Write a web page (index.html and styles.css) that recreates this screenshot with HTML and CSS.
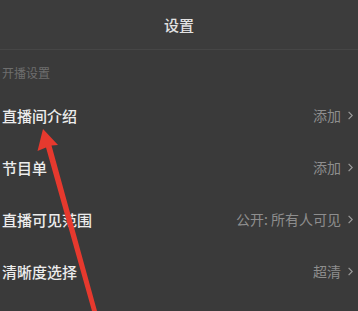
FILE: index.html
```html
<!DOCTYPE html>
<html lang="zh">
<head>
<meta charset="utf-8">
<link rel="stylesheet" href="styles.css">
</head>
<body>
<div class="screen">
  <header class="topbar">设置</header>
  <div class="section-label">开播设置</div>
  <ul class="list">
    <li class="row"><span class="label">直播间介绍</span><span class="value">添加<svg class="chev" viewBox="0 0 5 9"><polyline points="0.6,0.8 4.2,4.5 0.6,8.2"/></svg></span></li>
    <li class="row"><span class="label">节目单</span><span class="value">添加<svg class="chev" viewBox="0 0 5 9"><polyline points="0.6,0.8 4.2,4.5 0.6,8.2"/></svg></span></li>
    <li class="row"><span class="label">直播可见范围</span><span class="value">公开: 所有人可见<svg class="chev" viewBox="0 0 5 9"><polyline points="0.6,0.8 4.2,4.5 0.6,8.2"/></svg></span></li>
    <li class="row"><span class="label">清晰度选择</span><span class="value">超清<svg class="chev" viewBox="0 0 5 9"><polyline points="0.6,0.8 4.2,4.5 0.6,8.2"/></svg></span></li>
  </ul>
  <svg class="arrow" viewBox="0 0 358 311" width="358" height="311">
    <polygon points="43,129 37.5,151 46,147.5 92,311 97,311 51.5,145.5 58,145"/>
  </svg>
</div>
</body>
</html>
```
FILE: styles.css
```css
* { box-sizing: border-box; }
html, body { margin: 0; padding: 0; }
body {
  background: #3a3a3a;
  font-family: "Noto Sans CJK SC", "Noto Sans", sans-serif;
  width: 358px;
  height: 311px;
  overflow: hidden;
}
.screen {
  position: relative;
  width: 358px;
  height: 311px;
}
.topbar {
  height: 50px;
  display: flex;
  align-items: center;
  justify-content: center;
  font-size: 15px;
  font-weight: 500;
  color: #e2e2e2;
  background: #3c3c3c;
  border-bottom: 1px solid #464646;
}
.section-label {
  height: 39px;
  display: flex;
  align-items: center;
  padding: 5px 0 0 2px;
  font-size: 12px;
  color: #6e6e6e;
}
.list {
  list-style: none;
  margin: 0;
  padding: 0;
}
.row {
  height: 52px;
  display: flex;
  align-items: center;
  justify-content: space-between;
  padding: 0 5px 0 2px;
}
.label {
  font-size: 15px;
  font-weight: 500;
  color: #ececec;
}
.value {
  display: flex;
  align-items: center;
  gap: 7px;
  font-size: 14px;
  color: #8e8e8e;
}
.chev {
  width: 5px;
  height: 9px;
  fill: none;
  stroke: #9a9a9a;
  stroke-width: 1.2;
}
.arrow {
  position: absolute;
  left: 0;
  top: 0;
  pointer-events: none;
}
.arrow polygon {
  fill: #e6392e;
}
```
